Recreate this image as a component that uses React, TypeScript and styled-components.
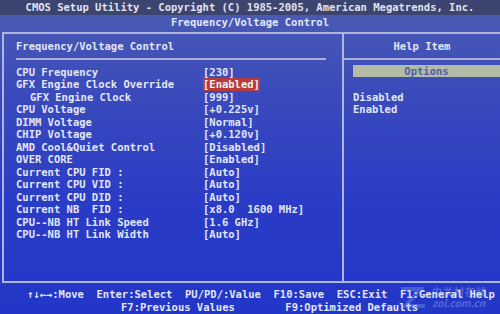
import React from 'react'
import styled, { createGlobalStyle } from 'styled-components'

const GlobalStyle = createGlobalStyle`
  html, body {
    margin: 0;
    padding: 0;
    background: #2638c4;
  }
`

const Screen = styled.div`
  position: relative;
  width: 500px;
  height: 314px;
  overflow: hidden;
  display: flex;
  flex-direction: column;
  background: linear-gradient(180deg, #4c5cb2 0%, #3a4abc 30%, #2a3cc6 65%, #2236c8 100%);
  font-family: 'DejaVu Sans Mono', 'Liberation Mono', monospace;
  font-size: 10.5px;
  font-weight: bold;
  color: #e2e6f4;
  white-space: pre;
`

const TitleBar = styled.div`
  height: 15px;
  line-height: 15px;
  background: #3c4470;
  text-align: center;
  color: #e0e3ee;
`

const SubTitle = styled.div`
  height: 17px;
  line-height: 15px;
  text-align: center;
`

const MainBox = styled.div`
  height: 248px;
  margin-left: 2px;
  border-top: 2px solid #b0b6da;
  border-left: 2px solid #b0b6da;
  border-bottom: 2px solid #b0b6da;
  display: grid;
  grid-template-columns: 340px 1fr;
`

const LeftPanel = styled.div`
  border-right: 2px solid #b0b6da;
  padding-left: 12px;
  padding-right: 16px;
`

const RightPanel = styled.div`
  display: flex;
  flex-direction: column;
`

const Heading = styled.div<{ $center?: boolean }>`
  height: 24px;
  line-height: 24px;
  text-align: ${p => (p.$center ? 'center' : 'left')};
`

const Rule = styled.div`
  height: 2px;
  background: #aab0d8;
`

const Rows = styled.div`
  margin-top: 6px;
  display: flex;
  flex-direction: column;
`

const Row = styled.div`
  display: grid;
  grid-template-columns: 187px 1fr;
  height: 12.5px;
  line-height: 12.5px;
`

const Label = styled.span<{ $indent?: boolean }>`
  padding-left: ${p => (p.$indent ? '14px' : '0')};
`

const Value = styled.span<{ $active?: boolean }>`
  justify-self: start;
  background: ${p => (p.$active ? '#b63c3c' : 'transparent')};
  color: ${p => (p.$active ? '#f2eeee' : 'inherit')};
`

const OptionsBar = styled.div`
  margin: 5px 0 0 9px;
  height: 12px;
  line-height: 12px;
  background: #b4bba6;
  color: #5060a8;
  text-align: center;
`

const OptionList = styled.div`
  margin: 14px 0 0 9px;
  display: flex;
  flex-direction: column;
`

const Option = styled.div`
  height: 12.5px;
  line-height: 12.5px;
`

const Footer = styled.div`
  padding-top: 5px;
  display: flex;
  flex-direction: column;
`

const FooterLine = styled.div<{ $indent: number }>`
  height: 13px;
  line-height: 13px;
  padding-left: ${p => p.$indent}px;
`

const Watermark = styled.div`
  position: absolute;
  left: 398px;
  top: 284px;
  display: flex;
  align-items: center;
  gap: 4px;
  opacity: 0.28;
  pointer-events: none;
`

const MarkText = styled.div`
  display: flex;
  flex-direction: column;
  font-family: 'Noto Sans CJK SC', 'DejaVu Sans', sans-serif;
  font-weight: bold;
  line-height: 11px;
  color: #cfe0ff;
`

const MarkCn = styled.span`
  font-size: 10px;
  letter-spacing: 1px;
`

const MarkEn = styled.span`
  font-size: 10px;
  font-style: italic;
`

const rows: { label: string; value: string; indent?: boolean; active?: boolean }[] = [
  { label: 'CPU Frequency', value: '[230]' },
  { label: 'GFX Engine Clock Override', value: '[Enabled]', active: true },
  { label: 'GFX Engine Clock', value: '[999]', indent: true },
  { label: 'CPU Voltage', value: '[+0.225v]' },
  { label: 'DIMM Voltage', value: '[Normal]' },
  { label: 'CHIP Voltage', value: '[+0.120v]' },
  { label: 'AMD Cool&Quiet Control', value: '[Disabled]' },
  { label: 'OVER CORE', value: '[Enabled]' },
  { label: 'Current CPU FID :', value: '[Auto]' },
  { label: 'Current CPU VID :', value: '[Auto]' },
  { label: 'Current CPU DID :', value: '[Auto]' },
  { label: 'Current NB  FID :', value: '[x8.0  1600 MHz]' },
  { label: 'CPU--NB HT Link Speed', value: '[1.6 GHz]' },
  { label: 'CPU--NB HT Link Width', value: '[Auto]' },
]

export default function App() {
  return (
    <>
      <GlobalStyle />
      <Screen>
        <TitleBar>CMOS Setup Utility - Copyright (C) 1985-2005, American Megatrends, Inc.</TitleBar>
        <SubTitle>Frequency/Voltage Control</SubTitle>
        <MainBox>
          <LeftPanel>
            <Heading>Frequency/Voltage Control</Heading>
            <Rule />
            <Rows>
              {rows.map(r => (
                <Row key={r.label}>
                  <Label $indent={r.indent}>{r.label}</Label>
                  <Value $active={r.active}>{r.value}</Value>
                </Row>
              ))}
            </Rows>
          </LeftPanel>
          <RightPanel>
            <Heading $center>Help Item</Heading>
            <Rule />
            <OptionsBar>Options</OptionsBar>
            <OptionList>
              <Option>Disabled</Option>
              <Option>Enabled</Option>
            </OptionList>
          </RightPanel>
        </MainBox>
        <Footer>
          <FooterLine $indent={27}>↑↓←→:Move  Enter:Select  PU/PD/:Value  F10:Save  ESC:Exit  F1:General Help</FooterLine>
          <FooterLine $indent={121}>F7:Previous Values        F9:Optimized Defaults</FooterLine>
        </Footer>
        <Watermark>
          <svg width="30" height="26" viewBox="0 0 30 26">
            <path d="M3 3 H27 L12 20 H27 V24 H3 L18 7 H3 Z" fill="#9fc4ff" />
          </svg>
          <MarkText>
            <MarkCn>中关村在线</MarkCn>
            <MarkEn>zol.com.cn</MarkEn>
          </MarkText>
        </Watermark>
      </Screen>
    </>
  )
}
